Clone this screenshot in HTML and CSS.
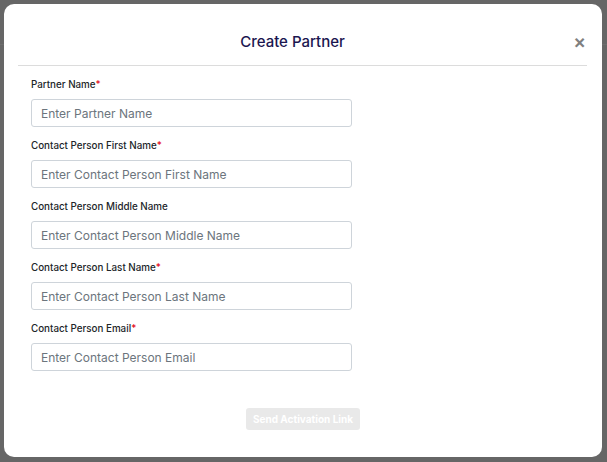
FILE: index.html
```html
<!DOCTYPE html>
<html>
<head>
<meta charset="utf-8">
<link rel="stylesheet" href="styles.css">
</head>
<body>
<div class="backdrop">
  <div class="modal">
    <div class="modal-header">
      <h2 class="modal-title">Create Partner</h2>
      <span class="close">&times;</span>
    </div>
    <form class="modal-body">
      <div class="field">
        <label class="label">Partner Name<span class="req">*</span></label>
        <input class="input" type="text" placeholder="Enter Partner Name">
      </div>
      <div class="field">
        <label class="label">Contact Person First Name<span class="req">*</span></label>
        <input class="input" type="text" placeholder="Enter Contact Person First Name">
      </div>
      <div class="field">
        <label class="label">Contact Person Middle Name</label>
        <input class="input" type="text" placeholder="Enter Contact Person Middle Name">
      </div>
      <div class="field">
        <label class="label">Contact Person Last Name<span class="req">*</span></label>
        <input class="input" type="text" placeholder="Enter Contact Person Last Name">
      </div>
      <div class="field">
        <label class="label">Contact Person Email<span class="req">*</span></label>
        <input class="input" type="text" placeholder="Enter Contact Person Email">
      </div>
      <div class="actions">
        <button class="btn" type="button" disabled>Send Activation Link</button>
      </div>
    </form>
  </div>
</div>
</body>
</html>
```

FILE: styles.css
```css
html, body {
  margin: 0;
  padding: 0;
}
body {
  width: 607px;
  height: 462px;
  overflow: hidden;
  background: #666666;
  font-family: Inter, "Noto Sans", sans-serif;
}
.backdrop {
  height: 462px;
  padding: 4px 5px 5px 4px;
  box-sizing: border-box;
  background: linear-gradient(#666 0, #666 44px, #6e6e6e 44px, #6e6e6e 45px, #666 45px);
}
.modal {
  width: 598px;
  height: 453px;
  background: #fff;
  border-radius: 10px;
  box-sizing: border-box;
}
.modal-header {
  display: flex;
  align-items: center;
  margin: 0 15px 0 14px;
  padding: 26px 0 11px;
  border-bottom: 1px solid #dcdcdc;
}
.modal-title {
  flex: 1;
  margin: 0;
  text-align: center;
  font-size: 15px;
  line-height: 24px;
  font-weight: 500;
  color: #1b1650;
}
.close {
  width: 20px;
  text-align: right;
  padding-right: 1px;
  box-sizing: border-box;
  font-size: 19px;
  line-height: 24px;
  color: #808080;
  font-weight: 600;
}
.modal-body {
  padding: 12px 0 0 27px;
  display: flex;
  flex-direction: column;
  gap: 12px;
}
.field {
  display: flex;
  flex-direction: column;
  gap: 7px;
}
.label {
  font-size: 9.8px;
  line-height: 14px;
  font-weight: 500;
  color: #212529;
}
.req {
  color: #e3000f;
}
.input {
  width: 321px;
  height: 28px;
  box-sizing: border-box;
  border: 1px solid #ced4da;
  border-radius: 3px;
  padding: 0 9px;
  font-family: Inter, "Noto Sans", sans-serif;
  font-size: 12px;
  color: #333;
  outline: none;
}
.input::placeholder {
  color: #6c757d;
}
.actions {
  display: flex;
  justify-content: center;
  padding-top: 25px;
  margin-left: -27px;
}
.btn {
  width: 114px;
  height: 22px;
  border: none;
  border-radius: 3px;
  background: #e9e9e9;
  color: #fff;
  font-family: Inter, "Noto Sans", sans-serif;
  font-size: 10px;
  font-weight: 700;
  padding: 0;
}
```
